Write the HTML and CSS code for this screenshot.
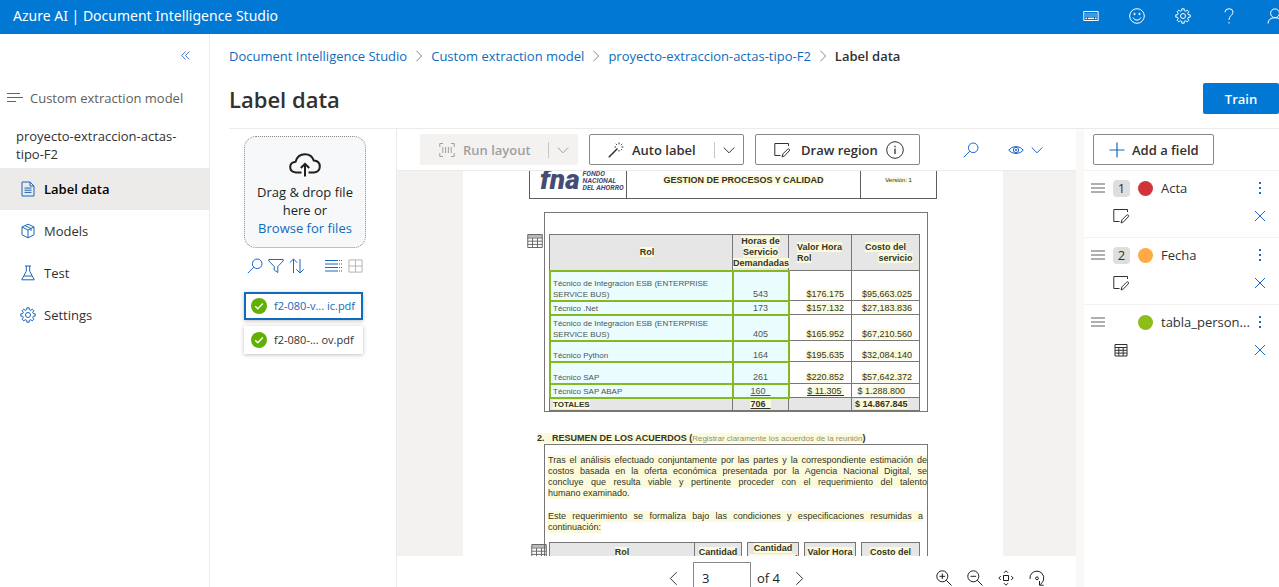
FILE: index.html
```html
<!DOCTYPE html>
<html lang="en">
<head>
<meta charset="utf-8">
<title>Label data - Document Intelligence Studio</title>
<link rel="stylesheet" href="styles.css">
</head>
<body>
<svg class="sprite" aria-hidden="true">
  <symbol id="gear" viewBox="-8 -8 16 16"><path d="M5.4-1.2H7.2V1.2H5.4L4.7 2.9L5.9 4.2L4.2 5.9L2.9 4.7L1.2 5.4V7.2H-1.2V5.4L-2.9 4.7L-4.2 5.9L-5.9 4.2L-4.7 2.9L-5.4 1.2H-7.2V-1.2H-5.4L-4.7-2.9L-5.9-4.2L-4.2-5.9L-2.9-4.7L-1.2-5.4V-7.2H1.2V-5.4L2.9-4.7L4.2-5.9L5.9-4.2L4.7-2.9Z"/><circle r="2.5"/></symbol>
  <symbol id="search" viewBox="0 0 16 16"><circle cx="10.2" cy="5.8" r="4.8"/><path d="M6.8 9.2L.8 15.2"/></symbol>
  <symbol id="region" viewBox="0 0 16 16"><path d="M6.5 13.5H.8V1.5H14.5V4M8 15L9 11.8L13.6 7.2Q14.6 6.4 15.3 7.2Q16 8 15.2 8.9L10.6 13.8Z"/></symbol>
  <symbol id="table" viewBox="0 0 16 16"><path d="M.75 1.5H15.25V14.5H.75ZM.75 5H15.25M.75 8.2H15.25M.75 11.4H15.25M5.5 5V14.5M10.5 5V14.5"/><path d="M.75 3.2H15.25" stroke-width="2.4" opacity=".45"/></symbol>
  <symbol id="table-small" viewBox="0 0 16 16"><path d="M2 2.5H14V14H2ZM2 5.5H14M2 8.3H14M2 11.1H14M5.8 5.5V14M10.2 5.5V14"/></symbol>
  <symbol id="down" viewBox="0 0 12 12"><path d="M.7 3.5L6 8.8L11.3 3.5"/></symbol>
  <symbol id="right" viewBox="0 0 10 16"><path d="M1.5 1L8.5 8L1.5 15"/></symbol>
  <symbol id="close" viewBox="0 0 12 12"><path d="M1 1L11 11M11 1L1 11"/></symbol>
  <symbol id="drag" viewBox="0 0 14 10"><path d="M0 1H14M0 5H14M0 9H14"/></symbol>
  <symbol id="more" viewBox="0 0 4 12"><path d="M1 0H3V2H1ZM1 5H3V7H1ZM1 10H3V12H1Z" fill="currentColor" stroke="none"/></symbol>
  <symbol id="check" viewBox="0 0 16 16"><circle cx="8" cy="8" r="8" fill="#5fb000" stroke="none"/><path d="M4.2 8.3L6.8 10.8L11.8 5.5" stroke="#fff" stroke-width="1.5"/></symbol>
</svg>

<header class="topbar">
  <a class="brand" href="#">Azure AI | Document Intelligence Studio</a>
  <div class="topbar-actions">
    <button aria-label="Keyboard shortcuts"><svg class="i16" viewBox="0 0 16 16"><path d="M.8 3.5H15.2V12.5H.8Z"/><path d="M2.5 6H13.5M2.5 8H13.5" stroke-dasharray="1 1" stroke-width="1.2"/><path d="M2.5 10.3H4M5 10.3H11M12 10.3H13.5" stroke-width="1.2"/></svg></button>
    <button aria-label="Feedback"><svg class="i16" viewBox="0 0 16 16"><circle cx="8" cy="8" r="7.3"/><path d="M4 9.5Q5.2 12.2 8 12.2Q10.8 12.2 12 9.5"/><circle cx="5.5" cy="6" r=".7" fill="#fff"/><circle cx="10.5" cy="6" r=".7" fill="#fff"/></svg></button>
    <button aria-label="Settings"><svg class="i16"><use href="#gear"/></svg></button>
    <button aria-label="Help"><svg class="i16" viewBox="0 0 16 16"><path d="M4 4.3Q4 .7 8 .7Q12 .7 12 4.2Q12 6 10 7.6Q8 9.2 8 11.8M8 14V15.5"/></svg></button>
    <button aria-label="Account"><svg class="i16" viewBox="0 0 16 16"><circle cx="8" cy="5.3" r="4.4"/><path d="M1 15.5Q1.5 9.7 8 9.7Q14.5 9.7 15 15.5"/></svg></button>
  </div>
</header>

<div class="shell">
  <nav class="sidebar">
    <button class="collapse" aria-label="Collapse navigation"><svg viewBox="0 0 9 9"><path d="M4.5 .5L.7 4.5L4.5 8.5M8.3 .5L4.5 4.5L8.3 8.5"/></svg></button>
    <div class="model-type"><svg class="i16" viewBox="0 0 16 16"><path d="M0 3.5H13M0 7.5H16M0 11.5H9" stroke-width="1.2"/></svg>Custom extraction model</div>
    <div class="project">proyecto-extraccion-actas-tipo-F2</div>
    <a class="nav-item current" href="#"><svg class="i16" viewBox="0 0 16 16"><path d="M2 1H10L14 5V15H2ZM10 1V5H14M4.5 7H11.5M4.5 9.2H11.5M4.5 11.4H11.5"/></svg>Label data</a>
    <a class="nav-item" href="#"><svg class="i16" viewBox="0 0 16 16"><path d="M8 1.2L14 4V11.8L8 14.8L2 11.8V4ZM2 4L8 7L14 4M8 7V14.8M5 2.6L11 5.5V8"/></svg>Models</a>
    <a class="nav-item" href="#"><svg class="i16" viewBox="0 0 16 16"><path d="M5 1H11M6.3 1V6.2L1.7 14.8H14.3L9.7 6.2V1M4 11H12"/></svg>Test</a>
    <a class="nav-item" href="#"><svg class="i16"><use href="#gear"/></svg>Settings</a>
  </nav>

  <main class="main">
    <nav class="crumbs" aria-label="Breadcrumb">
      <a href="#">Document Intelligence Studio</a><svg><use href="#right"/></svg>
      <a href="#">Custom extraction model</a><svg><use href="#right"/></svg>
      <a href="#">proyecto-extraccion-actas-tipo-F2</a><svg><use href="#right"/></svg>
      <span>Label data</span>
    </nav>
    <div class="title-row"><h1>Label data</h1><button class="train">Train</button></div>

    <div class="workspace">
      <section class="files">
        <div class="dropzone">
          <svg class="cloud" viewBox="0 0 32 24"><path d="M12.5 19.5H7Q1.2 19 1.2 14Q1.2 9.3 6.6 8.7Q8.5 1.2 16 1.2Q22.8 1.2 24.8 7.6Q30.8 8 30.8 13.6Q30.8 19 25 19.5H19.5M16 23.5V11M11.8 15L16 10.8L20.2 15"/></svg>
          <div>Drag &amp; drop file<br>here or<br><a href="#">Browse for files</a></div>
        </div>
        <div class="file-tools">
          <button aria-label="Search"><svg class="i16"><use href="#search"/></svg></button>
          <button aria-label="Filter"><svg class="i16" viewBox="0 0 16 16"><path d="M.8 1.5H15.2V3L9.8 8.5V14.5L6.2 12V8.5L.8 3Z"/></svg></button>
          <button aria-label="Sort"><svg class="i16" viewBox="0 0 16 16"><path d="M4.5 15V1M.8 4.7L4.5 1L8.2 4.7M11 1V15M7.3 11.3L11 15L14.7 11.3"/></svg></button>
          <button class="list-view" aria-label="List view"><svg viewBox="0 0 18 16"><path d="M0 2.5H13M0 6H13M0 9.5H13M0 13H13"/><path d="M14 2.5H18M14 6H18M14 9.5H18M14 13H18" stroke-dasharray="1 1"/></svg></button>
          <button class="grid-view" aria-label="Grid view"><svg viewBox="0 0 16 16"><path d="M1 1.5H15V14.5H1ZM8 1.5V14.5M1 8H15"/></svg></button>
        </div>
        <button class="file selected"><svg class="i16"><use href="#check"/></svg><span>f2-080-v... ic.pdf</span></button>
        <button class="file"><svg class="i16"><use href="#check"/></svg><span>f2-080-... ov.pdf</span></button>
      </section>

      <section class="viewer">
        <div class="toolbar">
          <button class="tool run" disabled><svg class="i16" viewBox="0 0 16 16"><path d="M4 1.5H.8V5M12 1.5H15.2V5M4 14.5H.8V11M12 14.5H15.2V11M3.8 5V11M6.6 5V11M9.4 5V11M12.2 5V11"/></svg><span>Run layout</span><i></i><svg class="i12"><use href="#down"/></svg></button>
          <button class="tool auto"><svg class="i16" viewBox="0 0 16 16"><path d="M.8 15.2L9.5 6.5" stroke-width="1.5"/><path d="M11 .5V3M11 8V10M6.5 5H8.5M13.5 5H16M7.8 1.8L9.2 3.2M14.2 1.8L12.8 3.2M14.2 8.2L12.8 6.8" stroke-dasharray="1.5 .7"/></svg><span>Auto label</span><i></i><svg class="i12"><use href="#down"/></svg></button>
          <button class="tool draw"><svg class="i16"><use href="#region"/></svg><span>Draw region</span><svg class="i18" viewBox="0 0 18 18"><circle cx="9" cy="9" r="8.3"/><path d="M9 7.5V13M9 4.8V6.2" stroke-width="1.3"/></svg></button>
          <button class="plain find" aria-label="Search document"><svg class="i16"><use href="#search"/></svg></button>
          <button class="plain show" aria-label="View options"><svg class="i16" viewBox="0 0 16 16"><path d="M.7 8.2Q3.5 4.5 8 4.5Q12.5 4.5 15.3 8.2Q12.5 11.5 8 11.5Q3.5 11.5 .7 8.2Z"/><circle cx="8" cy="8" r="2.6"/><circle cx="8" cy="8" r=".7"/></svg><svg class="i12"><use href="#down"/></svg></button>
        </div>

        <div class="canvas">
          <article class="page" lang="es">
            <table class="doc-head"><tr>
              <td class="logo"><div><b>fna</b><em>FONDO<br>NACIONAL<br>DEL AHORRO</em></div></td>
              <td class="process"><mark>GESTION DE PROCESOS Y CALIDAD</mark></td>
              <td class="version"><mark>Versión: 1</mark></td>
            </tr></table>

            <div class="frame">
              <svg class="table-pin"><use href="#table"/></svg>
              <table class="roles">
                <colgroup><col class="c-rol"><col class="c-hours"><col class="c-rate"><col class="c-cost"></colgroup>
                <tr class="r-head"><th class="wide"><mark>Rol</mark></th><th><mark>Horas de<br>Servicio<br>Demandadas</mark></th><th class="left"><mark>Valor Hora<br>Rol</mark></th><th class="cost-head"><mark>Costo del</mark><br><mark>servicio</mark></th></tr>
                <tr class="r-30"><td class="tag">Técnico de Integracion ESB (ENTERPRISE<br>SERVICE BUS)</td><td class="tag num">543</td><td><mark>$176.175</mark></td><td><mark>$95,663.025</mark></td></tr>
                <tr class="r-14"><td class="tag">Técnico .Net</td><td class="tag num">173</td><td><mark>$157.132</mark></td><td><mark>$27,183.836</mark></td></tr>
                <tr class="r-26"><td class="tag">Técnico de Integracion ESB (ENTERPRISE<br>SERVICE BUS)</td><td class="tag num">405</td><td><mark>$165.952</mark></td><td><mark>$67,210.560</mark></td></tr>
                <tr class="r-21"><td class="tag">Técnico Python</td><td class="tag num">164</td><td><mark>$195.635</mark></td><td><mark>$32,084.140</mark></td></tr>
                <tr class="r-22"><td class="tag">Técnico SAP</td><td class="tag num">261</td><td><mark>$220.852</mark></td><td><mark>$57,642.372</mark></td></tr>
                <tr class="r-14"><td class="tag">Técnico SAP ABAP</td><td class="tag num"><u>160&nbsp;&nbsp;</u></td><td><mark><u>$ 11.305&nbsp;</u></mark></td><td class="short"><mark>$ 1.288.800</mark></td></tr>
                <tr class="r-total"><td><mark>TOTALES</mark></td><td class="num"><mark><u>706&nbsp;&nbsp;</u></mark></td><td></td><td class="short"><mark>$ 14.867.845</mark></td></tr>
              </table>
            </div>

            <h2><mark>2. &nbsp; RESUMEN DE LOS ACUERDOS (<small>Registrar claramente los acuerdos de la reunión</small>)</mark></h2>
            <div class="frame open">
              <p><span>Tras el análisis efectuado conjuntamente por las partes y la correspondiente estimación de</span>
              <span>costos basada en la oferta económica presentada por la Agencia Nacional Digital, se</span>
              <span>concluye que resulta viable y pertinente proceder con el requerimiento del talento</span>
              <span class="end">humano examinado.</span></p>
              <p class="narrow"><span>Este requerimiento se formaliza bajo las condiciones y especificaciones resumidas a</span>
              <span class="end">continuación:</span></p>
              <div class="next">
                <svg class="table-pin"><use href="#table"/></svg>
                <table class="roles second">
                  <colgroup><col class="d-rol"><col class="d-a"><col class="d-gap"><col class="d-b"><col class="d-gap"><col class="d-b"><col class="d-gap"><col></colgroup>
                  <tr><th><mark>Rol</mark></th><th><mark>Cantidad</mark></th><td class="gap"></td><th class="tall"><mark>Cantidad<br>Horas Total</mark></th><td class="gap"></td><th><mark>Valor Hora</mark></th><td class="gap"></td><th><mark>Costo del</mark></th></tr>
                </table>
              </div>
            </div>
          </article>
        </div>

        <footer class="pager">
          <div class="pages">
            <button aria-label="Previous page"><svg class="chev back"><use href="#right"/></svg></button>
            <input aria-label="Page number" value="3"><span>of 4</span>
            <button aria-label="Next page"><svg class="chev"><use href="#right"/></svg></button>
          </div>
          <div class="zooms">
            <button aria-label="Zoom in"><svg class="i16" viewBox="0 0 16 16"><circle cx="6.3" cy="6.3" r="5.5"/><path d="M10.3 10.3L15.5 15.5M3.5 6.3H9.1M6.3 3.5V9.1"/></svg></button>
            <button aria-label="Zoom out"><svg class="i16" viewBox="0 0 16 16"><circle cx="6.3" cy="6.3" r="5.5"/><path d="M10.3 10.3L15.5 15.5M3.5 6.3H9.1"/></svg></button>
            <button aria-label="Fit page"><svg class="i16" viewBox="0 0 16 16"><path d="M5.5 5.5H10.5V10.5H5.5ZM6 2.8L8 .8L10 2.8M6 13.2L8 15.2L10 13.2M2.8 6L.8 8L2.8 10M13.2 6L15.2 8L13.2 10"/></svg></button>
            <button aria-label="Rotate"><svg class="i16" viewBox="0 0 16 16"><path d="M1 9Q.5 5 3.5 2.6Q8-.4 12.5 2.8Q15.8 6 14.5 10.2Q13.8 12.5 11 14.8M10.5 11V15.2H14.7"/><circle cx="8" cy="8.3" r="1.4"/></svg></button>
          </div>
        </footer>
      </section>

      <aside class="fields">
        <div class="add-row"><button class="tool add"><svg class="i16" viewBox="0 0 16 16"><path d="M8 .5V15.5M.5 8H15.5" stroke-width="1.2"/></svg>Add a field</button></div>
        <div class="field">
          <svg class="grip"><use href="#drag"/></svg><span class="badge">1</span><span class="dot red"></span><span class="name">Acta</span><button aria-label="More options"><svg class="more"><use href="#more"/></svg></button>
          <svg class="kind i16"><use href="#region"/></svg><button class="remove" aria-label="Clear Acta"><svg class="i12"><use href="#close"/></svg></button>
        </div>
        <div class="field">
          <svg class="grip"><use href="#drag"/></svg><span class="badge">2</span><span class="dot orange"></span><span class="name">Fecha</span><button aria-label="More options"><svg class="more"><use href="#more"/></svg></button>
          <svg class="kind i16"><use href="#region"/></svg><button class="remove" aria-label="Clear Fecha"><svg class="i12"><use href="#close"/></svg></button>
        </div>
        <div class="field">
          <svg class="grip"><use href="#drag"/></svg><span></span><span class="dot green"></span><span class="name">tabla_person...</span><button aria-label="More options"><svg class="more"><use href="#more"/></svg></button>
          <svg class="kind i16"><use href="#table-small"/></svg><button class="remove" aria-label="Clear tabla"><svg class="i12"><use href="#close"/></svg></button>
        </div>
      </aside>
    </div>
  </main>
</div>
</body>
</html>
```

FILE: styles.css
```css
* { box-sizing: border-box; }

body {
  margin: 0;
  height: 100vh;
  display: flex;
  flex-direction: column;
  overflow: hidden;
  font: 13px/18px "Open Sans", "Noto Sans", sans-serif;
  color: #323130;
  background: #fff;
}

a { color: #0f6cbd; text-decoration: none; }
button { font: inherit; color: inherit; background: none; border: 0; padding: 0; display: flex; align-items: center; }
svg { fill: none; stroke: currentColor; flex: none; display: block; }
.sprite { position: absolute; width: 0; height: 0; }
.i12 { width: 12px; height: 12px; }
.i16 { width: 16px; height: 16px; }
.i18 { width: 18px; height: 18px; }

/* Top bar */
.topbar {
  flex: none;
  height: 34px;
  padding: 0 0 3px 13px;
  display: flex;
  align-items: center;
  justify-content: space-between;
  overflow: hidden;
  background: #0078d4;
  color: #fff;
}
.brand { color: #fff; font-family: "Noto Sans", sans-serif; font-size: 14px; }
.topbar-actions { display: flex; margin-right: -19px; }
.topbar-actions button { width: 46px; justify-content: center; }

.shell { flex: 1; min-height: 0; display: flex; }

/* Navigation */
.sidebar { flex: none; width: 210px; border-right: 1px solid #edebe9; }
.collapse { margin: 17px 19px 0 auto; color: #4a72c4; }
.collapse svg { width: 9px; height: 9px; }
.model-type { margin: 29px 0 0 7px; display: flex; align-items: center; gap: 7px; color: #605e5c; }
.model-type svg { color: #2a6fc0; }
.project { margin: 20px 16px 5px; font-weight: 500; }
.nav-item { height: 42px; padding-left: 20px; display: flex; align-items: center; gap: 8px; color: #323130; }
.nav-item svg { color: #1b66b8; }
.nav-item.current { background: #edebe9; color: #000; font-weight: 600; }

/* Page heading */
.main { flex: 1; min-width: 0; display: flex; flex-direction: column; padding-left: 19px; }
.crumbs { height: 44px; display: flex; align-items: center; gap: 8px; }
.crumbs svg { width: 8px; height: 12px; color: #605e5c; }
.crumbs span { font-weight: 600; }
.title-row { height: 50px; padding-top: 5px; display: flex; align-items: flex-start; justify-content: space-between; }
h1 { margin: 0; font-size: 22px; line-height: 32px; font-weight: 600; }
.train { width: 76px; height: 31px; justify-content: center; border-radius: 2px; background: #0078d4; color: #fff; font-weight: 600; }

.workspace { flex: 1; min-height: 0; display: flex; border-top: 1px solid #edebe9; }

/* File list */
.files { flex: none; width: 167px; padding: 7px 30px 0 15px; }
.dropzone {
  width: 122px;
  height: 112px;
  padding-top: 16px;
  display: flex;
  flex-direction: column;
  align-items: center;
  gap: 6px;
  border: 1px dotted #8a8886;
  border-radius: 12px;
  background: #f7f8fa;
  text-align: center;
  color: #201f1e;
}
.cloud { width: 32px; height: 24px; stroke-width: 2; }
.file-tools { width: 119px; height: 36px; padding-left: 3px; display: flex; align-items: center; gap: 5px; color: #1b66c9; }
.list-view { margin-left: auto; }
.list-view svg { width: 18px; height: 16px; }
.grid-view svg { width: 15px; height: 16px; color: #b3b0ad; }
.file {
  width: 119px;
  height: 28px;
  margin: 6px 0;
  padding-left: 7px;
  gap: 7px;
  font-size: 11px;
  white-space: nowrap;
  box-shadow: 0 1px 4px rgba(0, 0, 0, .25);
}
.file.selected { margin-top: 8px; padding-left: 5px; border: 2px solid #0f6cbd; color: #0f6cbd; }

/* Document viewer */
.viewer { flex: 1; min-width: 0; display: flex; flex-direction: column; border-left: 1px solid #edebe9; }
.toolbar { flex: none; height: 42px; padding-left: 23px; display: flex; align-items: center; border-bottom: 1px solid #edebe9; }
.tool { height: 31px; flex: none; border: 1px solid #8a8886; border-radius: 2px; font-weight: 600; color: #323130; }
.tool i { width: 1px; height: 16px; margin-right: 8px; background: #c8c6c4; }
.run { width: 158px; margin-right: 11px; padding-left: 18px; border-color: #f3f2f1; background: #f3f2f1; color: #a19f9d; }
.auto { width: 155px; margin-right: 11px; padding-left: 18px; }
.run span, .auto span { flex: 1; padding-left: 8px; text-align: left; }
.run .i12, .auto .i12 { margin-right: 8px; }
.draw { width: 165px; padding-left: 18px; gap: 11px; }
.draw .i18 { margin-left: -3px; }
.plain { color: #1b66c9; gap: 7px; }
.find { margin-left: 43px; }
.show { margin-left: 29px; }

.canvas { flex: 1; min-height: 0; overflow: hidden; display: flex; justify-content: center; padding-right: 7px; background: #f3f2f1; }
.page {
  width: 540px;
  padding: 0 67px 0 66px;
  background: #fff;
  font: 9px/11px "Liberation Sans", Arial, sans-serif;
  color: #33332a;
}
mark { background: #fbfadb; color: inherit; }
.page table { border-collapse: collapse; table-layout: fixed; }
.page td, .page th { padding: 0; }

.doc-head { width: 408px; height: 58px; margin-top: -30px; }
.doc-head td { border: 1px solid #605e5c; text-align: center; vertical-align: bottom; }
.page .doc-head .process { width: 234px; padding-bottom: 12px; font-weight: 700; }
.page .doc-head .version { width: 76px; padding-bottom: 12px; font-size: 6px; }
.logo div { padding: 0 0 6px 10px; display: flex; align-items: flex-end; gap: 3px; color: #454b73; text-align: left; }
.logo b { font: italic 900 28px/24px Roboto, sans-serif; }
.logo em { font: italic 700 7px/7px Roboto, sans-serif; }

.frame { position: relative; width: 384px; margin: 13px 0 0 15px; padding: 21px 0 0 4px; border: 1px solid #797775; }
.table-pin { position: absolute; left: -18px; top: 20px; width: 16px; height: 16px; color: #6b6967; }
.roles { width: 371px; }
.roles th, .roles td { border: 1px solid #797775; }
.roles th { background: #e6e6e6; font-size: 9px; line-height: 11px; }
.page .roles .wide { padding-left: 12px; }
.page .roles .left { padding-left: 8px; text-align: left; }
.cost-head mark:last-child { margin-left: 20px; }
.page .roles td { padding: 0 7px 0 3px; vertical-align: bottom; text-align: right; white-space: nowrap; }
.page .roles td:first-child { text-align: left; font-size: 8px; line-height: 11px; }
.page .roles .num { padding: 0 2px; text-align: center; }
.page .roles .short { padding-right: 14px; }
.roles .tag { background: #ebfcff; color: #4c5650; outline: 2px solid #86b81f; outline-offset: -1px; }
.c-rol { width: 183px; }
.c-hours { width: 56px; }
.c-rate { width: 63px; }
.r-head { height: 36px; }
.r-30 { height: 30px; }
.r-26 { height: 26px; }
.r-22 { height: 22px; }
.r-21 { height: 21px; }
.r-14 { height: 14px; }
.r-total { height: 13px; font-weight: 700; }
.page .r-total td { background: #e6e6e6; }

h2 { margin: 21px 0 0 8px; font-size: 9px; line-height: 11px; white-space: nowrap; }
h2 small { font-size: 8px; font-weight: 400; color: #8f8f78; }
.frame.open { margin-top: 0; padding: 10px 0 0; border-bottom: 0; }
.open p { margin: 0 0 12px 3px; }
.open p span { display: block; text-align: justify; text-align-last: justify; background: #fbfadb; }
.open p .end { width: fit-content; }
.open .narrow { width: 375px; margin-bottom: 9px; }
.next { position: relative; padding-left: 4px; }
.next .table-pin { left: -14px; top: 1px; }
.page .second th { height: 24px; padding-top: 4px; vertical-align: top; }
.page .second .gap { padding: 0; border-top: 0; }
.page .second .tall { padding-top: 0; }
.d-rol { width: 145px; }
.d-a { width: 47px; }
.d-b { width: 51px; }
.d-gap { width: 6px; }

/* Pager */
.pager { flex: none; height: 31px; padding: 6px 31px 0 0; display: grid; grid-template-columns: 1fr auto 1fr; overflow: hidden; color: #201f1e; }
.pages { grid-column: 2; display: flex; align-items: center; height: 32px; padding-left: 31px; }
.pages input { width: 58px; height: 32px; margin: 0 6px 0 15px; padding: 0 8px; border: 1px solid #8a8886; font: inherit; color: inherit; }
.pages span { margin-right: 15px; }
.chev { width: 9px; height: 15px; }
.back { transform: rotate(180deg); }
.zooms { height: 32px; display: flex; align-items: center; justify-content: flex-end; gap: 15px; }

/* Fields */
.fields { flex: none; width: 203px; border-left: 8px solid #faf9f8; }
.add-row { height: 42px; padding: 5px 0 0 9px; border-bottom: 1px solid #f3f2f1; }
.add { width: 121px; padding-left: 15px; gap: 7px; }
.add svg { color: #0f6cbd; }
.field {
  height: 67px;
  padding: 3px 13px 0 7px;
  display: grid;
  grid-template-columns: 14px 17px 15px minmax(0, 1fr) 12px;
  grid-template-rows: 28px 28px;
  column-gap: 8px;
  align-items: center;
  border-bottom: 1px solid #f3f2f1;
}
.field:last-child { border-bottom: 0; }
.grip { width: 14px; height: 10px; color: #605e5c; }
.badge { height: 17px; line-height: 17px; border-radius: 4px; background: #dfdedd; text-align: center; }
.dot { width: 15px; height: 15px; border-radius: 50%; }
.red { background: #d13438; }
.orange { background: #ffaa44; }
.green { background: #8cbd18; }
.name { white-space: nowrap; }
.field button { justify-content: center; color: #1b66c9; }
.more { width: 4px; height: 12px; }
.kind { grid-column: 2 / 4; }
.remove { grid-column: 5; }
```
